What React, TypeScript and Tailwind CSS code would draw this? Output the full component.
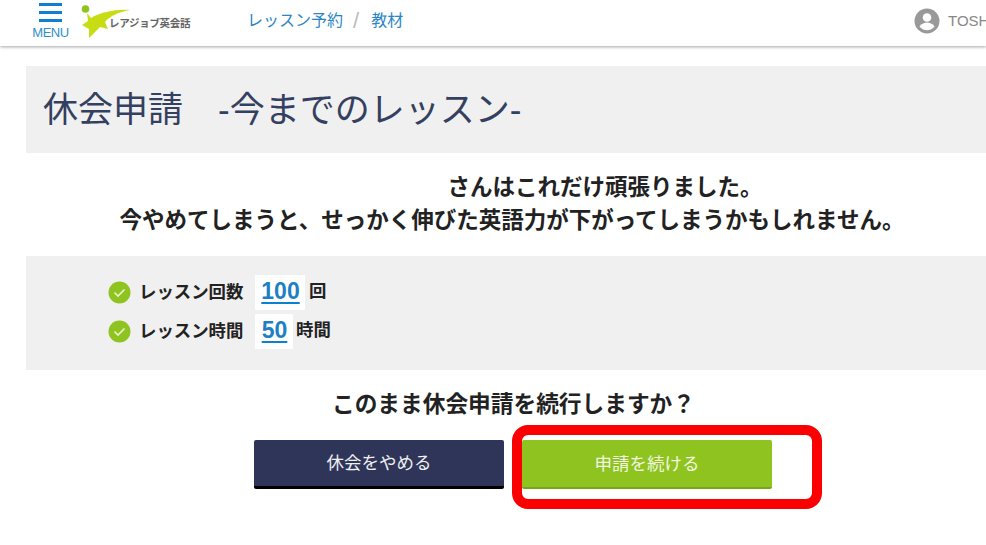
const jp = { fontFamily: '"Liberation Sans", "Noto Sans CJK JP", sans-serif' };

function Check() {
  return (
    <svg width="23" height="23" viewBox="0 0 23 23" className="shrink-0">
      <circle cx="11.5" cy="11.5" r="11" fill="#8fc31f" />
      <path d="M6.5 11.5l3.5 3.5 6.5-6.5" fill="none" stroke="#e8f3cf" strokeWidth="1.6" />
    </svg>
  );
}

function Logo() {
  return (
    <svg width="50" height="40" viewBox="0 0 50 40" className="shrink-0">
      <circle cx="4.500" cy="8" r="3.800" fill="#8fc31f" />
      <path d="M6 12 L10 17 C20 11 35 8 49 9 C38 11 29 15 24 21 L27 28 L19 26 L8 37 L8 28 L1 24 L7 20 Z" fill="#c8dc14" />
    </svg>
  );
}

export default function App() {
  return (
    <div className="w-[986px] h-[545px] overflow-hidden bg-white relative" style={jp}>
      <header className="h-[46px] flex items-center shadow-[0_1px_3px_rgba(0,0,0,0.35)] pl-[32px] whitespace-nowrap">
        <div className="w-[37px] self-start flex flex-col items-center pt-[3px]">
          <div className="w-[23px] flex flex-col gap-[5px] -ml-[1px]">
            <span className="h-[3px] bg-[#0f7fd0]" />
            <span className="h-[3px] bg-[#0f7fd0]" />
            <span className="h-[3px] bg-[#0f7fd0]" />
          </div>
          <span className="text-[13px] leading-[14px] mt-[4px] text-[#2f8fd0] tracking-[-0.5px]">MENU</span>
        </div>
        <div className="ml-[12px] -mt-[4px] flex items-center w-[110px]">
          <Logo />
          <span className="text-[10.500px] font-bold text-[#666] -ml-[22px] mt-[6px] tracking-[-0.3px]">レアジョブ英会話</span>
        </div>
        <nav className="ml-[56px] -mt-[4px] flex items-center text-[16px] text-[#2a85c5]">
          <span>レッスン予約</span>
          <span className="ml-[10px] mr-[12px] text-[#bbb] text-[22px] leading-[24px] font-light">/</span>
          <span>教材</span>
        </nav>
        <div className="ml-auto -mt-[4px] flex items-center gap-[8px] text-[15px] text-[#888] w-[72px] shrink-0 overflow-hidden">
          <svg width="26" height="26" viewBox="0 0 26 26" className="shrink-0">
            <circle cx="13" cy="13" r="12.500" fill="#999" />
            <circle cx="13" cy="9.500" r="4.300" fill="#fff" />
            <path d="M5.500 18.500c2-3 5-4 7.500-4s5.500 1 7.500 4c-1.700 2.300-4.500 3.700-7.500 3.700s-5.800-1.400-7.500-3.700z" fill="#fff" />
          </svg>
          <span>TOSHI</span>
        </div>
      </header>

      <main className="pl-[26px] pt-[20px]">
        <h1 className="h-[87px] bg-[#f0f0f0] flex items-center pl-[17px] pt-[2px] text-[35px] text-[#34405f] whitespace-pre font-normal">休会申請　-今までのレッスン-</h1>

        <div className="mt-[18px] w-[972px] text-center text-[22.500px] leading-[33px] font-bold text-[#222]">
          <p className="pl-[186px]">さんはこれだけ頑張りました。</p>
          <p>今やめてしまうと、せっかく伸びた英語力が下がってしまうかもしれません。</p>
        </div>

        <div className="mt-[19px] h-[114px] bg-[#f0f0f0] pl-[82px] pt-[17px] flex flex-col gap-[1px] text-[17.400px] font-bold text-[#222]">
          <div className="flex items-center h-[38px]">
            <Check />
            <span className="ml-[8px] w-[116px]">レッスン回数</span>
            <span className="h-[35px] w-[50px] bg-white flex items-center justify-center pl-[1px] pb-[2px] text-[23px] text-[#1f7fc4] underline underline-offset-[3px] decoration-[2px] decoration-[#0f7fd0]">100</span>
            <span className="ml-[4px] -mt-[1px]">回</span>
          </div>
          <div className="flex items-center h-[38px]">
            <Check />
            <span className="ml-[8px] w-[116px]">レッスン時間</span>
            <span className="h-[35px] w-[38px] bg-white flex items-center justify-center pl-[1px] pb-[2px] text-[23px] text-[#1f7fc4] underline underline-offset-[3px] decoration-[2px] decoration-[#0f7fd0]">50</span>
            <span className="ml-[3px] -mt-[1px]">時間</span>
          </div>
        </div>

        <p className="mt-[19px] w-[960px] pl-[15px] text-center text-[22.700px] leading-[30px] font-bold text-[#222]">このまま休会申請を続行しますか？</p>

        <div className="mt-[21px] ml-[228px] flex gap-[18px] text-[17.500px]">
          <button className="w-[250px] h-[49px] pt-[1px] rounded-[2px] bg-[#2e3559] border-b-[3px] border-black text-[#f0f0f0]">休会をやめる</button>
          <button className="w-[250px] h-[49px] pt-[1px] rounded-[2px] bg-[#8fc31f] border-b-[2px] border-[#7aa51a] text-[#f2f7e0]">申請を続ける</button>
        </div>
      </main>

      <div className="absolute left-[512px] top-[425px] w-[310px] h-[84px] rounded-[16px] border-[10px] border-[#fa0000]" />
    </div>
  );
}
